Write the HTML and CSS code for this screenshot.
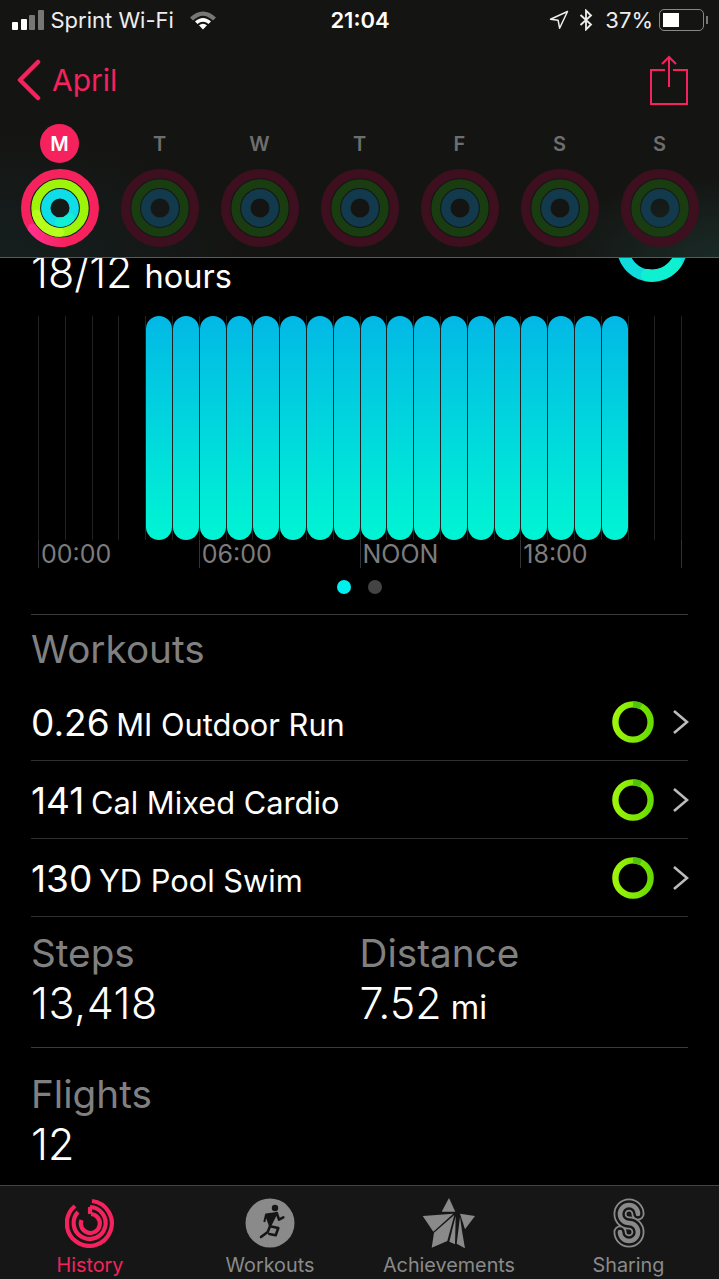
FILE: index.html
```html
<!DOCTYPE html>
<html lang="en">
<head>
    <meta charset="UTF-8">
    <meta name="viewport" content="width=device-width, initial-scale=1.0">
    <title>Activity</title>
    <link rel="stylesheet" href="styles.css">
</head>
<body>
    <svg class="defs" width="0" height="0">
        <defs>
            <g id="rings-dim" fill="none">
                <circle cx="40" cy="40" r="34.4" stroke="#3e0f1f" stroke-width="9.2"/>
                <circle cx="40" cy="40" r="24.3" stroke="#193c10" stroke-width="8.8"/>
                <circle cx="40" cy="40" r="14.2" stroke="#123a4c" stroke-width="9.4"/>
            </g>
            <linearGradient id="pink-head" x1="0" y1="0" x2="1" y2="0">
                <stop offset="0" stop-color="#ff2f8c"/>
                <stop offset="1" stop-color="#f5225d"/>
            </linearGradient>
            <linearGradient id="ring-green" x1="0" y1="0" x2="1" y2="0">
                <stop offset="0" stop-color="#9cf50a"/>
                <stop offset="1" stop-color="#68dc00"/>
            </linearGradient>
            <g id="progress-ring" fill="none">
                <circle cx="22" cy="22" r="17.600" stroke="url(#ring-green)" stroke-width="6.400"/>
                <path d="M22 4.400A17.600 17.600 0 0 1 30 6.300" stroke="#4fc40a" stroke-width="6.400"/>
            </g>
        </defs>
    </svg>

    <header class="top">
        <div class="status">
            <div class="status-left">
                <span class="signal"><i class="on"></i><i class="on"></i><i></i><i></i></span>
                <span>Sprint Wi-Fi</span>
                <svg class="wifi" width="28" height="20" viewBox="0 0 28 20">
                    <path d="M1 7.500C9-.5 19-.5 27 7.500l-3 3C17 4 11 4 4 10.500z" fill="#777"/>
                    <path d="M6 11.500c5-4.800 11-4.800 16 0l-2.600 2.600c-3.400-3-7.400-3-10.800 0z" fill="#fff"/>
                    <path d="M10 15.300c2.500-2 5.500-2 8 0l-4 4.200z" fill="#fff"/>
                </svg>
            </div>
            <div class="status-time">21:04</div>
            <div class="status-right">
                <svg width="20" height="20" viewBox="0 0 20 20">
                    <path d="M18.500 1.500 1.500 9.200l7.600 1 1.500 8z" fill="none" stroke="#eee" stroke-width="1.500" stroke-linejoin="round"/>
                </svg>
                <svg class="bt" width="14" height="22" viewBox="0 0 14 22">
                    <path d="M1.500 6 12 15.500 7 20.500V1.500l5 5L1.500 16" fill="none" stroke="#eee" stroke-width="1.800"/>
                </svg>
                <span class="pct">37%</span>
                <span class="battery"><span class="battery-fill"></span></span>
                <span class="battery-tip"></span>
            </div>
        </div>

        <div class="nav">
            <a class="back" href="#">
                <svg width="26" height="42" viewBox="0 0 26 42">
                    <path d="M22 3 4 21l18 18" fill="none" stroke="#f5225d" stroke-width="4.500" stroke-linecap="round" stroke-linejoin="round"/>
                </svg>
                <span>April</span>
            </a>
            <svg width="38" height="50" viewBox="0 0 38 50">
                <path d="M15 15H1V49H37V15H23M19 32V2M12 9 19 2 26 9" fill="none" stroke="#f5225d" stroke-width="2"/>
            </svg>
        </div>

        <div class="week">
            <div class="day">
                <span class="day-name today">M</span>
                <svg width="80" height="80" viewBox="0 0 80 80" fill="none">
                    <circle cx="40" cy="40" r="34.400" stroke="#f5225d" stroke-width="9.200"/>
                    <path d="M12.400 60.200A34.400 34.400 0 0 0 46 73.900" stroke="url(#pink-head)" stroke-width="9.200" stroke-linecap="round"/>
                    <circle cx="40" cy="40" r="24.300" stroke="#9df50a" stroke-width="8.800"/>
                    <path d="M16.400 46A24.300 24.300 0 0 0 40 64.300" stroke="#b9ff1e" stroke-width="8.800" stroke-linecap="round"/>
                    <circle cx="40" cy="40" r="14.200" stroke="#0fdde8" stroke-width="9.400"/>
                    <path d="M39.500 54.200A14.200 14.200 0 0 0 50 50" stroke="#10f0d4" stroke-width="9.400" stroke-linecap="round"/>
                </svg>
            </div>
            <div class="day">
                <span class="day-name">T</span>
                <svg width="80" height="80" viewBox="0 0 80 80"><use href="#rings-dim"/></svg>
            </div>
            <div class="day">
                <span class="day-name">W</span>
                <svg width="80" height="80" viewBox="0 0 80 80"><use href="#rings-dim"/></svg>
            </div>
            <div class="day">
                <span class="day-name">T</span>
                <svg width="80" height="80" viewBox="0 0 80 80"><use href="#rings-dim"/></svg>
            </div>
            <div class="day">
                <span class="day-name">F</span>
                <svg width="80" height="80" viewBox="0 0 80 80"><use href="#rings-dim"/></svg>
            </div>
            <div class="day">
                <span class="day-name">S</span>
                <svg width="80" height="80" viewBox="0 0 80 80"><use href="#rings-dim"/></svg>
            </div>
            <div class="day">
                <span class="day-name">S</span>
                <svg width="80" height="80" viewBox="0 0 80 80"><use href="#rings-dim"/></svg>
            </div>
        </div>
    </header>

    <main class="content">
        <div class="hours">
            <div class="big">18/12 <small>hours</small></div>
            <svg width="72" height="26" viewBox="0 0 72 26" fill="none">
                <circle cx="36" cy="-11" r="29" stroke="#0fdcdc" stroke-width="12"/>
                <path d="M31 17A29 29 0 0 0 60 5" stroke="#0ff0d0" stroke-width="12" stroke-linecap="round"/>
            </svg>
        </div>

        <div class="chart">
            <div class="columns" id="columns"></div>
            <div class="axis">
                <span>00:00</span>
                <span>06:00</span>
                <span>NOON</span>
                <span>18:00</span>
            </div>
        </div>

        <div class="dots"><i class="active"></i><i></i></div>

        <section class="section workouts">
            <h3 class="label">Workouts</h3>
            <div class="workout">
                <span class="workout-text"><b>0.26</b> MI Outdoor Run</span>
                <svg width="44" height="44" viewBox="0 0 44 44"><use href="#progress-ring"/></svg>
                <svg class="chev" width="18" height="26" viewBox="0 0 18 26"><path d="M3 2 16 13 3 24" fill="none" stroke="#bbb" stroke-width="2.600"/></svg>
            </div>
            <div class="workout">
                <span class="workout-text"><b>141</b> Cal Mixed Cardio</span>
                <svg width="44" height="44" viewBox="0 0 44 44"><use href="#progress-ring"/></svg>
                <svg class="chev" width="18" height="26" viewBox="0 0 18 26"><path d="M3 2 16 13 3 24" fill="none" stroke="#bbb" stroke-width="2.600"/></svg>
            </div>
            <div class="workout">
                <span class="workout-text"><b>130</b> YD Pool Swim</span>
                <svg width="44" height="44" viewBox="0 0 44 44"><use href="#progress-ring"/></svg>
                <svg class="chev" width="18" height="26" viewBox="0 0 18 26"><path d="M3 2 16 13 3 24" fill="none" stroke="#bbb" stroke-width="2.600"/></svg>
            </div>
        </section>

        <section class="section stats">
            <div class="stat">
                <h3 class="label">Steps</h3>
                <div class="big wide">13,418</div>
            </div>
            <div class="stat">
                <h3 class="label">Distance</h3>
                <div class="big">7.52<small> mi</small></div>
            </div>
        </section>

        <section class="section flights">
            <h3 class="label">Flights</h3>
            <div class="big">12</div>
        </section>
    </main>

    <nav class="tabs">
        <a class="tab active" href="#">
            <svg width="50" height="50" viewBox="0 0 50 50" fill="none" stroke="#f5225d" stroke-width="4.200">
                <path d="M27 3A22.500 22.500 0 1 1 10 8"/>
                <path d="M13 14A16 16 0 1 0 25 9"/>
                <path d="M25 9V16"/>
                <path d="M26 16A9.500 9.500 0 1 1 16.500 22"/>
            </svg>
            <span>History</span>
        </a>
        <a class="tab" href="#">
            <svg width="50" height="50" viewBox="0 0 50 50">
                <circle cx="25" cy="25" r="24.500" fill="#8a8a8a"/>
                <circle cx="30" cy="10" r="3.200" fill="#151515"/>
                <path d="M19.300 24 21 16.600 31.700 15 25 28.300 21 16.600" fill="#151515" stroke="#151515" stroke-width="2" stroke-linejoin="round"/>
                <path d="M31.700 15 34 21.600 38.300 19.300M25 28.300 22.700 34 16 39M25 28.300 33.300 30 30.700 37.300 24.300 36" fill="none" stroke="#151515" stroke-width="2.600" stroke-linejoin="round" stroke-linecap="round"/>
            </svg>
            <span>Workouts</span>
        </a>
        <a class="tab" href="#">
            <svg width="54" height="50" viewBox="12 7 54 50">
                <path d="M39 7 45.300 20.700H31.700z" fill="#8a8a8a"/>
                <path d="M12.700 25 43.300 22.700 23.300 40.700z" fill="#8a8a8a"/>
                <path d="M24 41.700 44.300 24 37.300 50 21.700 56.700z" fill="#8a8a8a"/>
                <path d="M45.700 25 39.300 50.700 45 53.300z" fill="#8a8a8a"/>
                <path d="M50 26 46.700 52.700 55 57.300 52 40z" fill="#8a8a8a"/>
                <path d="M50 22.700 65 25 55 38.300z" fill="#8a8a8a"/>
            </svg>
            <span>Achievements</span>
        </a>
        <a class="tab" href="#">
            <svg width="32" height="50" viewBox="0 0 32 50" fill="none" stroke-linecap="round">
                <path d="M25 16A9 9 0 1 0 16 25A9 9 0 1 1 7 34" stroke="#8a8a8a" stroke-width="13"/>
                <path d="M25 16A9 9 0 1 0 16 25A9 9 0 1 1 7 34" stroke="#161616" stroke-width="9.400"/>
                <path d="M25 16A9 9 0 1 0 16 25A9 9 0 1 1 7 34" stroke="#8a8a8a" stroke-width="4.600"/>
            </svg>
            <span>Sharing</span>
        </a>
    </nav>

    <script>
        // hourly columns, bars are filled from 04:00 to 21:00
        const columns = document.getElementById("columns");
        for (let hour = 0; hour < 24; hour++) {
            const col = document.createElement("div");
            col.className = "col";
            if (hour >= 4 && hour < 22) {
                const bar = document.createElement("div");
                bar.className = "bar";
                col.appendChild(bar);
            }
            columns.appendChild(col);
        }
    </script>
</body>
</html>
```

FILE: styles.css
```css
* {
    box-sizing: border-box;
}

body {
    margin: 0;
    width: 719px;
    height: 1279px;
    overflow: hidden;
    display: flex;
    flex-direction: column;
    font-family: Inter, "Liberation Sans", sans-serif;
    background-color: #000;
    color: #fff;
}

.defs {
    position: absolute;
}

.top {
    height: 258px;
    flex: none;
    background: radial-gradient(ellipse 170px 80px at 100% 100%, #1a2a26 0%, rgba(26, 42, 38, 0) 100%), radial-gradient(ellipse 240px 120px at 0 100%, #151f1e 0%, rgba(21, 31, 30, 0) 100%), #141513;
    border-bottom: 1px solid #5a5a5a;
}

.status {
    height: 40px;
    padding: 0 11px 0 12px;
    display: grid;
    grid-template-columns: 1fr auto 1fr;
    align-items: center;
    font-size: 22px;
    color: #eee;
}

.status-left {
    display: flex;
    align-items: center;
    gap: 7px;
}

.signal {
    display: flex;
    align-items: flex-end;
    gap: 2.500px;
}

.signal i {
    width: 6px;
    background-color: #777;
    border-radius: 1px;
}

.signal i:nth-child(1) { height: 8px; }
.signal i:nth-child(2) { height: 11px; }
.signal i:nth-child(3) { height: 15px; }
.signal i:nth-child(4) { height: 20px; }
.signal i.on { background-color: #fff; }

.wifi {
    margin-left: 8px;
}

.status-time {
    font-weight: 600;
    color: #fff;
}

.status-right {
    display: flex;
    align-items: center;
    justify-content: flex-end;
}

.bt {
    margin-left: 10px;
}

.pct {
    margin-left: 12px;
}

.battery {
    margin-left: 6px;
    width: 45px;
    height: 22px;
    padding: 3px;
    border: 1.5px solid #888;
    border-radius: 5px;
}

.battery-fill {
    display: block;
    width: 16px;
    height: 100%;
    background-color: #fff;
}

.battery-tip {
    margin-left: 2px;
    width: 2px;
    height: 8px;
    background-color: #777;
}

.nav {
    height: 84px;
    padding: 0 31px 4px 16px;
    display: flex;
    align-items: center;
    justify-content: space-between;
}

.back {
    display: flex;
    align-items: center;
    gap: 10px;
    color: #f5225d;
    font-size: 30px;
    text-decoration: none;
}

.week {
    padding: 0 9.500px;
    display: grid;
    grid-template-columns: repeat(7, 100px);
}

.day {
    display: flex;
    flex-direction: column;
    align-items: center;
    gap: 5px;
}

.day-name {
    width: 39px;
    height: 39px;
    border-radius: 50%;
    display: flex;
    align-items: center;
    justify-content: center;
    font-size: 20px;
    font-weight: 600;
    color: #6e6e6e;
}

.day-name.today {
    background-color: #f5225d;
    color: #fff;
}

.content {
    flex: 1;
    min-height: 0;
    padding: 0 31px;
    overflow: hidden;
}

.big {
    margin-top: 5px;
    font-size: 43px;
    line-height: 46px;
    font-weight: 300;
}

.big.wide {
    letter-spacing: 0.5px;
}

.big small {
    font-size: 32.500px;
    font-weight: 400;
}

.hours {
    height: 32px;
    display: flex;
    justify-content: space-between;
    align-items: flex-start;
}

.hours .big {
    margin-top: 0;
    line-height: 28px;
}

.chart {
    margin: 26px 7px 0;
    width: 644px;
}

.columns {
    height: 224px;
    display: flex;
    border-right: 1px solid #222;
}

.col {
    flex: 1;
    border-left: 1px solid #222;
    position: relative;
}

.bar {
    position: absolute;
    left: 0;
    right: 0;
    top: 0;
    bottom: 0;
    border-radius: 14px;
    background: linear-gradient(#02b8e6, #00f5d4);
}

.axis {
    height: 28px;
    display: grid;
    grid-template-columns: repeat(4, 1fr);
    border-right: 1px solid #333;
    font-size: 25px;
    line-height: 28px;
    color: #7c7c7c;
}

.axis span {
    padding-left: 2px;
    border-left: 1px solid #333;
}

.dots {
    margin-top: 12px;
    height: 14px;
    display: flex;
    justify-content: center;
    gap: 17px;
}

.dots i {
    width: 14px;
    height: 14px;
    border-radius: 50%;
    background-color: #444;
}

.dots i.active {
    background-color: #00f0ee;
}

.section {
    border-top: 1px solid #3a3a3a;
}

.workouts {
    margin-top: 20px;
}

.label {
    margin: 0;
    font-size: 38.700px;
    line-height: 44px;
    font-weight: 400;
    color: #808080;
}

.workouts .label {
    padding-top: 12px;
    height: 68px;
}

.workout {
    height: 78px;
    display: flex;
    align-items: center;
    border-bottom: 1px solid #2e2e2e;
    font-size: 30.800px;
}

.workout-text {
    flex: 1;
    padding-top: 2px;
}

.workout-text b {
    margin-right: -2px;
    font-size: 37px;
    font-weight: 400;
}

.chev {
    margin: 0 -1px 0 16px;
}

.stats {
    border-top: 0;
    height: 130px;
    display: flex;
    padding-top: 14px;
}

.stat {
    width: 329px;
}

.flights {
    padding-top: 24px;
}

.tabs {
    height: 94px;
    flex: none;
    padding: 12px 0 0;
    background-color: #161616;
    border-top: 1px solid #444;
    display: grid;
    grid-template-columns: 180px 180px 178px 181px;
}

.tab {
    display: flex;
    flex-direction: column;
    align-items: center;
    gap: 5px;
    color: #8a8a8a;
    font-size: 19.800px;
    text-decoration: none;
}

.tab.active {
    color: #f5225d;
}
```
